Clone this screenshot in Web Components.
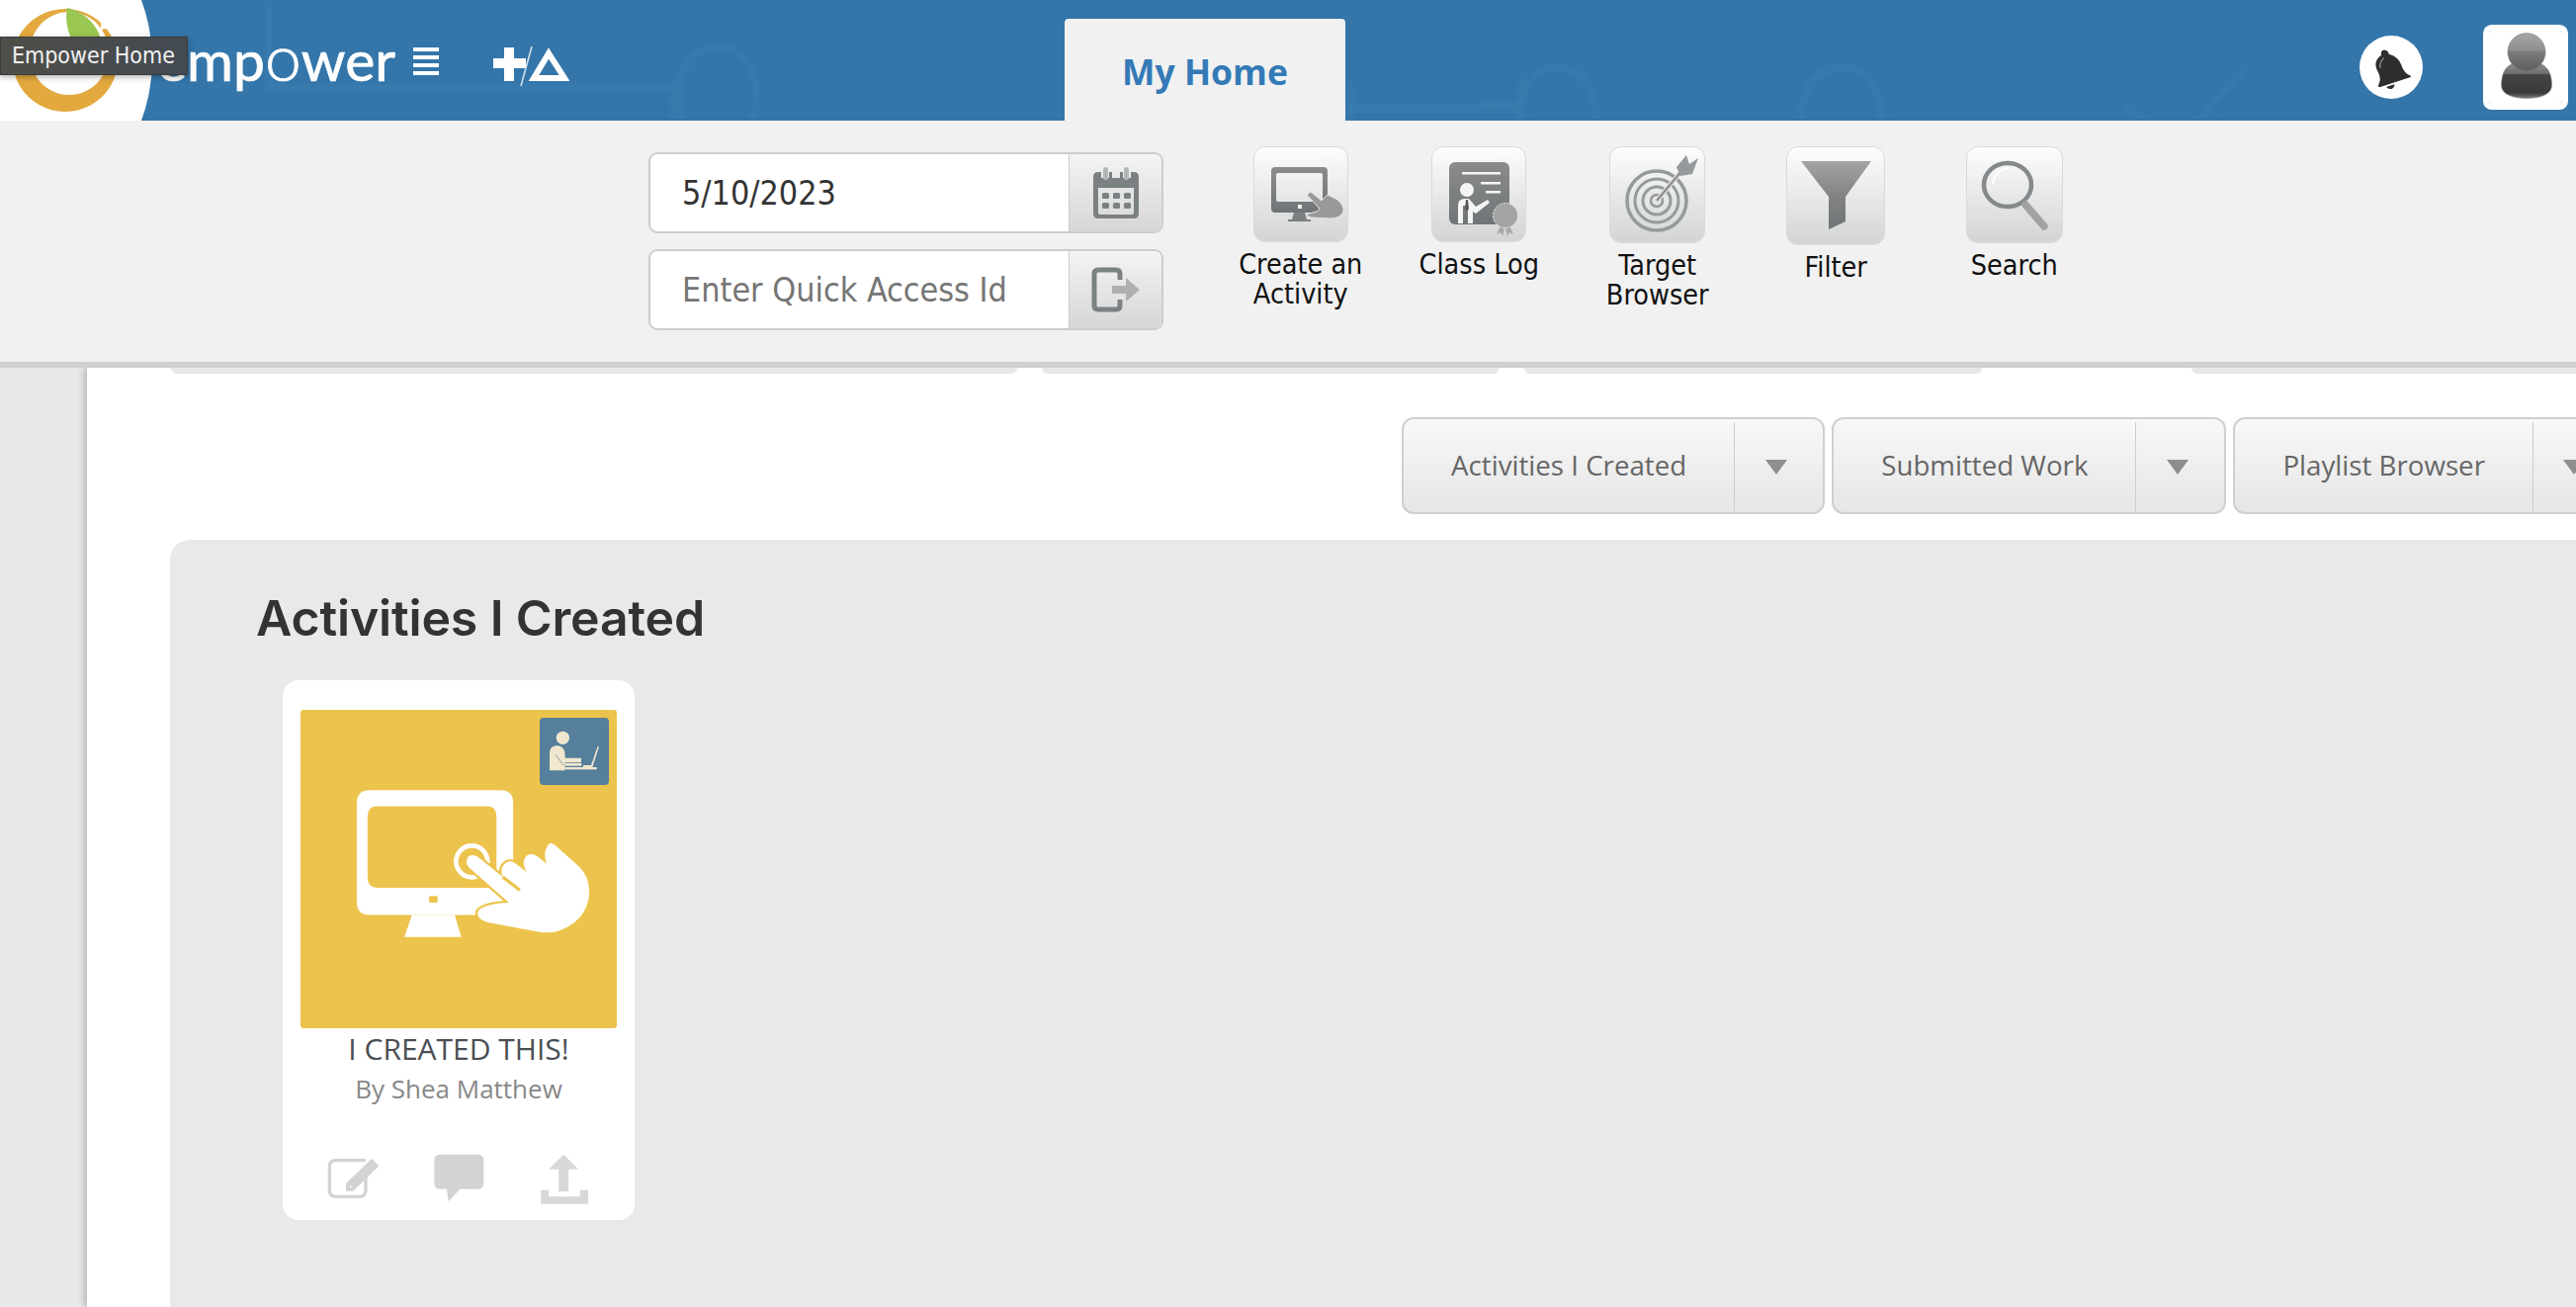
<!DOCTYPE html>
<html>
<head>
<meta charset="utf-8">
<title>Empower</title>
<style>
  html, body { margin: 0; padding: 0; height: 100%; overflow: hidden; background: #fff; }
  body { display: flex; flex-direction: column; font-family: "Open Sans", sans-serif; }
  svg { display: block; }
</style>
</head>
<body>
<app-header></app-header>
<tool-bar>
  <quick-inputs></quick-inputs>
  <tool-tile label="Create an Activity" w="96" h="97">
    <svg width="96" height="97" viewBox="0 0 96 97">
      <defs><linearGradient id="g1" x1="0" y1="0" x2="0" y2="1"><stop offset="0" stop-color="#8b8b8b"/><stop offset="1" stop-color="#6f7577"/></linearGradient></defs>
      <path fill="url(#g1)" fill-rule="evenodd" d="M22 21H71Q75 21 75 25V63Q75 67 71 67H22Q18 67 18 63V25Q18 21 22 21ZM25 27Q23 27 23 29V54Q23 56 25 56H68Q70 56 70 54V29Q70 27 68 27Z"/>
      <path fill="#7b7f80" d="M41 67H52L54 74H58V76H35V74H39Z"/>
      <rect x="45" y="59" width="4" height="4" fill="#eee"/>
      <path fill="#999" stroke="#e6e6e6" stroke-width="1" d="M54 49L58 46L69 55L75 49L85 54Q92 60 91 66Q88 73 78 73L58 72L53 69L64 66L67 63Z"/>
    </svg>
  </tool-tile>
  <tool-tile label="Class Log" w="96" h="97">
    <svg width="96" height="97" viewBox="0 0 96 97">
      <rect x="18" y="16" width="61" height="63" rx="6" fill="url(#g1)"/>
      <g fill="#f5f5f5"><rect x="31" y="26" width="39" height="2.5"/><rect x="50" y="36" width="20" height="2.5"/><rect x="55" y="45" width="15" height="2.5"/>
        <circle cx="36" cy="44" r="7"/><path d="M27 78V60Q27 53 34 53H38L45 61L57 54L59 57L45 68L42 66V78H37V60H32V78Z"/></g>
      <path fill="#555" d="M35 54h2l1 9-2 3-2-3z"/>
      <path fill="#a8a8a8" d="M70 80l-4 9 4-2 2 4 2-8zM79 80l4 9-4-2-2 4-2-8z"/>
      <circle cx="75" cy="70" r="12.5" fill="#a3a3a3" stroke="#e2e2e2" stroke-width="1" stroke-dasharray="3 1"/>
    </svg>
  </tool-tile>
  <tool-tile label="Target Browser" w="97" h="98">
    <svg width="97" height="98" viewBox="0 0 97 98">
      <g fill="none" stroke="#959a9c"><circle cx="48" cy="55" r="30" stroke-width="3.5"/><circle cx="48" cy="55" r="22" stroke-width="3"/><circle cx="48" cy="55" r="14" stroke-width="3"/><circle cx="48" cy="55" r="6" stroke-width="2.5"/></g>
      <path d="M48 55L74 24" stroke="#dcdcdc" stroke-width="5"/>
      <path d="M48 55L74 24" stroke="#8a8a8a" stroke-width="2"/>
      <path fill="#959a9c" d="M68 21L78 9L81 18L90 12L84 28L72 30Z"/>
    </svg>
  </tool-tile>
  <tool-tile label="Filter" w="100" h="100">
    <svg width="100" height="100" viewBox="0 0 100 100">
      <defs><linearGradient id="g2" x1="0" y1="0" x2="0" y2="1"><stop offset="0" stop-color="#a4a4a4"/><stop offset=".5" stop-color="#838383"/><stop offset="1" stop-color="#6e7678"/></linearGradient></defs>
      <path fill="url(#g2)" d="M15 15H86L60 51V76L43 84V51Z"/>
    </svg>
  </tool-tile>
  <tool-tile label="Search" w="98" h="98">
    <svg width="98" height="98" viewBox="0 0 98 98">
      <ellipse cx="42" cy="39" rx="24" ry="22" fill="none" stroke="#85898b" stroke-width="4.5"/>
      <path d="M27 39Q28 24 43 22" fill="none" stroke="#fff" stroke-width="2"/>
      <path d="M60 59L79 81" stroke="#a2a2a2" stroke-width="7.5" stroke-linecap="round"/>
    </svg>
  </tool-tile>
</tool-bar>
<app-main>
  <activity-panel heading="Activities I Created">
    <activity-card title-text="I CREATED THIS!" author="By Shea Matthew"></activity-card>
  </activity-panel>
</app-main>

<script>
function shadow(el, html) {
  el.attachShadow({ mode: 'open' }).innerHTML = html;
}

class AppHeader extends HTMLElement {
  connectedCallback() {
    shadow(this, `
<style>
  :host { display: flex; flex: 0 0 122px; position: relative; background: #3476aa; z-index: 3; overflow: hidden;
    font-family: "DejaVu Sans", sans-serif; }
  .bg { position: absolute; left: 0; top: 0; filter: blur(2.5px); }
  .logo { flex: 0 0 154px; height: 122px; position: relative; }
  .brand { flex: 0 0 259px; margin-left: 5px; position: relative; height: 122px; line-height: 114px;
    font-family: Lato, sans-serif; font-size: 57px; color: #fff; white-space: nowrap; -webkit-text-stroke: .7px #fff; }
  .o { font-size: 66px; font-weight: 300; position: relative; }
  .o i { position: absolute; left: 20px; top: 12px; width: 12px; height: 15px; background: #3476aa; border-radius: 50% 50% 60% 40%; transform: rotate(25deg); }
  .menu { flex: 0 0 26px; margin-top: 48px; height: 28px; position: relative; display: flex; flex-direction: column; justify-content: space-between; }
  .menu span { height: 4px; background: #fff; }
  .plus { margin: 46px 0 0 54px; position: relative; }
  .tab { position: relative; margin: 19px 0 0 501px; width: 284px; height: 103px; box-sizing: border-box; background: #f1f1f1;
    border-radius: 4px 4px 0 0; text-align: center; color: #337ab7; font: 700 35.5px/106px "Open Sans", sans-serif; }
  .right { margin-left: auto; display: flex; position: relative; align-items: flex-start; padding-right: 8px; gap: 61px; }
  .bell { margin-top: 36px; width: 64px; height: 64px; }
  .avatar { margin-top: 25px; width: 86px; height: 86px; }
  .tip { position: absolute; left: 0; top: 37px; width: 190px; height: 39px; box-sizing: border-box; color: #f2f2f2; font-size: 23px; font-stretch: condensed;
    line-height: 37px; padding-left: 11px; white-space: nowrap; background: linear-gradient(90deg, #4f4e48, #434a52); border: 1px solid #3c3c3c; box-shadow: 0 2px 6px rgba(0,0,0,.3); }
</style>
<svg class="bg" width="2606" height="122" fill="none" stroke="#397cae" stroke-width="5">
  <path d="M272 0V88H685M682 92V122"/>
  <ellipse cx="726" cy="95" rx="40" ry="48"/>
  <path d="M1366 122V88M1366 108H1540V80"/>
  <ellipse cx="1576" cy="112" rx="38" ry="44"/>
  <path d="M1500 106H1536"/>
  <ellipse cx="1863" cy="112" rx="40" ry="44"/>
  <path d="M2150 106L2170 122M2270 72Q2240 100 2225 122"/>
</svg>
<div class="logo">
  <svg width="154" height="122" viewBox="0 0 154 122">
    <circle cx="-20.6" cy="61" r="174.6" fill="#fff"/>
    <path fill="#e3a93e" fill-rule="evenodd" d="M66 9A53 52 0 1 1 65.9 9ZM70 12C48 12 30 30 30 54C30 78 48 96 70 96C92 96 110 78 110 54C110 30 92 12 70 12Z"/>
    <path fill="#fff" d="M66 0H102V30L112 28V10Z"/>
    <path fill="#9ac752" d="M68 8C86 12 100 26 103 44C104 52 98 60 92 62C74 50 64 28 68 8Z"/>
  </svg>
</div>
<div class="brand">emp<span class="o">o<i></i></span>wer</div>
<div class="menu"><span></span><span></span><span></span><span></span></div>
<svg class="plus" width="78" height="44" viewBox="0 0 78 44">
  <path fill="#fff" d="M12 2H22V13H34V23H22V36H12V23H1V13H12Z"/>
  <path d="M29 41L40 1" stroke="#cfdfeb" stroke-width="1.6"/>
  <path fill="none" stroke="#fff" stroke-width="6" d="M57 8L42 33H73Z"/>
</svg>
<div class="tab">My Home</div>
<div class="right">
  <svg class="bell" viewBox="561 107 192 192">
    <circle cx="657" cy="203" r="96" fill="#fff"/>
    <path fill="#2d2d2d" d="M627 156Q632 148 642 152Q650 155 650 163Q678 170 688 196Q694 220 718 230L716 233L622 264L617 261Q630 238 616 215Q600 186 627 166Z"/>
    <path fill="#2d2d2d" d="M642 263Q650 272 660 268Q668 264 667 255Z"/>
    <path fill="none" stroke="#d8d8d8" stroke-width="2.5" d="M624 205Q620 190 635 174"/>
  </svg>
  <svg class="avatar" viewBox="936 75 258 258">
    <defs>
      <linearGradient id="ah" x1="0" y1="0" x2="0" y2="1"><stop offset="0" stop-color="#a6a6a6"/><stop offset=".45" stop-color="#8f8f8f"/><stop offset=".5" stop-color="#7a7a7a"/><stop offset="1" stop-color="#5e5e5e"/></linearGradient>
      <linearGradient id="ab" x1="0" y1="0" x2="0" y2="1"><stop offset="0" stop-color="#8c8c8c"/><stop offset=".3" stop-color="#6c6c6c"/><stop offset=".33" stop-color="#444"/><stop offset=".85" stop-color="#3a3a3a"/><stop offset="1" stop-color="#7a7a7a"/></linearGradient>
    </defs>
    <rect x="936" y="75" width="258" height="258" rx="26" fill="#fff"/>
    <path fill="none" stroke="#d6e3ee" stroke-width="2" d="M955 100V94H962M1167 94H1174V100M955 306V313H962M1174 306V313H1167"/>
    <path fill="url(#ab)" stroke="#777" stroke-width="2" d="M1030 192C1000 200 991 230 992 262C994 288 1030 298 1068 298C1106 298 1142 288 1144 262C1146 230 1134 200 1106 192Z"/>
    <circle cx="1068" cy="158" r="57" fill="url(#ah)" stroke="#777" stroke-width="2"/>
  </svg>
</div>
<div class="tip">Empower Home</div>
`);
  }
}

class ToolBar extends HTMLElement {
  connectedCallback() {
    shadow(this, `
<style>
  :host { display: flex; flex: 0 0 auto; box-sizing: border-box; height: 250px; position: relative; z-index: 2; background: #f1f1f1;
    border-bottom: 6px solid #d0d0d0; padding: 26px 0 0 656px; align-items: flex-start; font-family: "DejaVu Sans", sans-serif; }
</style>
<slot></slot>`);
  }
}

class QuickInputs extends HTMLElement {
  connectedCallback() {
    shadow(this, `
<style>
  :host { display: flex; flex-direction: column; gap: 16px; width: 521px; margin: 6px 48.5px 0 0; font-size: 33.8px; font-stretch: condensed; }
  .group { display: flex; height: 82px; box-sizing: border-box; border: 2px solid #cdcdcd; border-radius: 9px; overflow: hidden; background: #fff; }
  .field { flex: 1; padding-left: 32px; line-height: 80px; color: #333; }
  .field.ph { color: #757575; }
  .addon { flex: 0 0 94px; display: flex; align-items: center; justify-content: center; border-left: 1px solid #ccc; box-sizing: border-box;
    background: linear-gradient(#f4f4f4, #d6d6d6); }
</style>
<div class="group">
  <div class="field">5/10/2023</div>
  <div class="addon">
    <svg width="46" height="52" viewBox="0 0 46 52">
      <path fill="#7b8183" fill-rule="evenodd" d="M5 5H8V11H16V5H19V11H27V5H30V11H38V5H41Q46 5 46 10V47Q46 52 41 52H5Q0 52 0 47V10Q0 5 5 5ZM5 21V46Q5 48 7 48H39Q41 48 41 46V21Z"/>
      <g fill="#b4b7b8"><rect x="10" y="0" width="5" height="13" rx="2.5"/><rect x="31" y="0" width="5" height="13" rx="2.5"/></g>
      <g fill="#7b8183"><rect x="9" y="26" width="7" height="6" rx="1.5"/><rect x="20" y="26" width="7" height="6" rx="1.5"/><rect x="31" y="26" width="7" height="6" rx="1.5"/><rect x="9" y="36" width="7" height="6" rx="1.5"/><rect x="20" y="36" width="7" height="6" rx="1.5"/><rect x="31" y="36" width="7" height="6" rx="1.5"/></g>
    </svg>
  </div>
</div>
<div class="group">
  <div class="field ph">Enter Quick Access Id</div>
  <div class="addon">
    <svg width="50" height="46" viewBox="0 0 50 46">
      <path fill="none" stroke="#7c8183" stroke-width="5" d="M29 13V7Q29 3 25 3H7Q3 3 3 7V39Q3 43 7 43H25Q29 43 29 39V33"/>
      <path fill="#aeb0b1" d="M21 19H35V11L49 23L35 35V27H21Z"/>
    </svg>
  </div>
</div>`);
  }
}

class ToolTile extends HTMLElement {
  connectedCallback() {
    const w = this.getAttribute('w'), h = this.getAttribute('h');
    shadow(this, `
<style>
  :host { display: flex; flex-direction: column; align-items: center; width: 180.5px; font-size: 28.5px; font-stretch: condensed; color: #111; text-align: center; }
  .tile { width: ${w}px; height: ${h}px; border: 1px solid #dadada; box-sizing: border-box; border-radius: 12px; background: linear-gradient(#fdfdfd, #d3d4d4); }
  .tile ::slotted(svg) { margin: -1px; }
  .label { width: 160px; margin-top: 8px; line-height: 30px; }
</style>
<div class="tile"><slot></slot></div>
<div class="label">${this.getAttribute('label')}</div>`);
  }
}

class SplitButton extends HTMLElement {
  connectedCallback() {
    shadow(this, `
<style>
  :host { display: flex; flex: 0 0 auto; height: 98px; box-sizing: border-box; border: 2px solid #cfcfcf; border-radius: 12px;
    background: linear-gradient(#f8f8f8, #e6e6e6); color: #666; font-size: 27.7px; }
  .text { padding: 0 48px; line-height: 92px; white-space: nowrap; }
  .arrow { flex: 0 0 90px; box-sizing: border-box; margin: 3px 0 1px; padding-right: 6px; border-left: 1px solid #ccc; display: flex; align-items: center; justify-content: center; }
  .arrow i { width: 0; height: 0; border: 11.5px solid transparent; border-top: 15px solid #8e8e8e; border-bottom: 0; }
</style>
<div class="text">${this.getAttribute('label')}</div>
<div class="arrow"><i></i></div>`);
  }
}

class AppMain extends HTMLElement {
  connectedCallback() {
    shadow(this, `
<style>
  :host { display: flex; flex: 1; min-height: 0; background: #e8e8e8; padding-left: 88px; overflow: hidden; }
  .content { flex: 1; min-width: 0; background: #fff; box-shadow: -3px 0 7px rgba(0,0,0,.22); position: relative; overflow: hidden; clip-path: inset(0 0 0 -12px); }
  .peek { display: flex; height: 6px; margin-left: 85px; gap: 25px; }
  .peek span { background: #e9e7ea; border-radius: 0 0 14px 14px; }
  .peek .a { flex: 0 0 856px; } .peek .b { flex: 0 0 463px; } .peek .c { flex: 0 0 463px; } .peek .d { flex: 1; margin-left: 187px; border-radius: 0 0 0 14px; }
  .buttons { display: flex; gap: 7px; margin: 44px 0 26px 1330px; height: 98px; }
</style>
<div class="content">
  <div class="peek"><span class="a"></span><span class="b"></span><span class="c"></span><span class="d"></span></div>
  <div class="buttons">
    <split-button label="Activities I Created"></split-button>
    <split-button label="Submitted Work"></split-button>
    <split-button label="Playlist Browser"></split-button>
  </div>
  <slot></slot>
</div>`);
  }
}

class ActivityPanel extends HTMLElement {
  connectedCallback() {
    shadow(this, `
<style>
  :host { display: block; box-sizing: border-box; margin-left: 84px; height: 776px; background: #eae8eb; border-radius: 20px 0 0 0; padding: 46px 0 0 87px; }
  h2 { margin: 0 0 29px; font: 600 50px/67px Inter, sans-serif; color: #333; letter-spacing: -.15px; }
</style>
<h2>${this.getAttribute('heading')}</h2>
<slot></slot>`);
  }
}

class ActivityCard extends HTMLElement {
  connectedCallback() {
    shadow(this, `
<style>
  :host { display: block; position: relative; width: 356px; height: 546px; box-sizing: border-box; margin-left: 27px; padding: 30px 18px 0; background: #fff; border-radius: 16px; text-align: center; }
  .thumb { width: 320px; height: 322px; background: #ecc34c; border-radius: 3px; position: relative; }
  .badge { position: absolute; left: 242px; top: 8px; width: 70px; height: 68px; border-radius: 4px; background: #557f9b; }
  .title { font-size: 30px; line-height: 42px; color: #4a4e53; white-space: nowrap; }
  .by { font-size: 26px; line-height: 36px; margin-top: 1px; color: #888; white-space: nowrap; }
  .actions { display: grid; grid-template-columns: repeat(3, 107px); justify-content: center; justify-items: center; margin-top: 47px; }
</style>
<div class="thumb">
  <svg width="320" height="322" viewBox="102 144 960 968">
    <path fill="#fff" fill-rule="evenodd" d="M312 388H708Q748 388 748 428V728Q748 768 708 768H312Q272 768 272 728V428Q272 388 312 388ZM335 437Q305 437 305 467V655Q305 685 335 685H667Q697 685 697 655V467Q697 437 667 437Z"/>
    <path fill="#fff" d="M440 768H570L590 835H417Z"/>
    <rect x="492" y="710" width="26" height="20" rx="4" fill="#ecc34c"/>
    <circle cx="622" cy="605" r="48" fill="none" stroke="#fff" stroke-width="14"/>
    <path fill="#fff" stroke="#ecc34c" stroke-width="14" paint-order="stroke" d="M612 590Q630 580 646 596L716 652Q706 628 722 612Q738 598 756 612L790 638Q772 610 786 590Q802 574 822 590L850 612Q836 578 856 552Q866 546 878 558L950 622Q985 660 978 715Q965 790 880 818Q850 825 820 818L670 790Q636 780 640 758Q650 735 735 730L612 622Q600 606 612 590Z"/>
    <path fill="none" stroke="#ecc34c" stroke-width="10" d="M716 652L768 692"/>
  </svg>
  <svg class="badge" viewBox="828 168 210 204">
    <g fill="#f0e7ce">
      <circle cx="898" cy="229" r="20"/>
      <path d="M858 272Q860 254 880 252Q898 252 904 272L905 290H954V304H905V328H858Z"/>
      <rect x="905" y="306" width="50" height="8"/>
      <rect x="905" y="318" width="96" height="7"/>
      <path d="M960 312H984L1004 254L1008 256L988 318H960Z"/>
    </g>
    <path stroke="#557f9b" stroke-width="2" fill="none" d="M876 280L900 312"/>
  </svg>
</div>
<div class="title">${this.getAttribute('title-text')}</div>
<div class="by">${this.getAttribute('author')}</div>
<div class="actions">
  <svg width="55" height="52" viewBox="180 412 165 156">
    <path fill="none" stroke="#d3d3d3" stroke-width="10" d="M300 435H210Q190 435 190 455V525Q190 545 210 545H280Q300 545 300 525V480"/>
    <path fill="#d3d3d3" d="M240 505L318 430L340 452L262 528H240ZM252 510V520L258 515Z"/>
  </svg>
  <svg width="55" height="52" viewBox="500 412 165 156">
    <path fill="#d3d3d3" d="M525 417H639Q657 417 657 435V504Q657 522 639 522H585L550 560L545 522H525Q507 522 507 504V435Q507 417 525 417Z"/>
  </svg>
  <svg width="52" height="52" viewBox="825 412 155 156">
    <path fill="#d8d8d8" d="M900 417L945 462H915V530H885V462H855ZM831 525H855V545H950V525H975V567H831Z"/>
  </svg>
</div>`);
  }
}

customElements.define('app-header', AppHeader);
customElements.define('tool-bar', ToolBar);
customElements.define('quick-inputs', QuickInputs);
customElements.define('tool-tile', ToolTile);
customElements.define('split-button', SplitButton);
customElements.define('app-main', AppMain);
customElements.define('activity-panel', ActivityPanel);
customElements.define('activity-card', ActivityCard);
</script>
</body>
</html>
